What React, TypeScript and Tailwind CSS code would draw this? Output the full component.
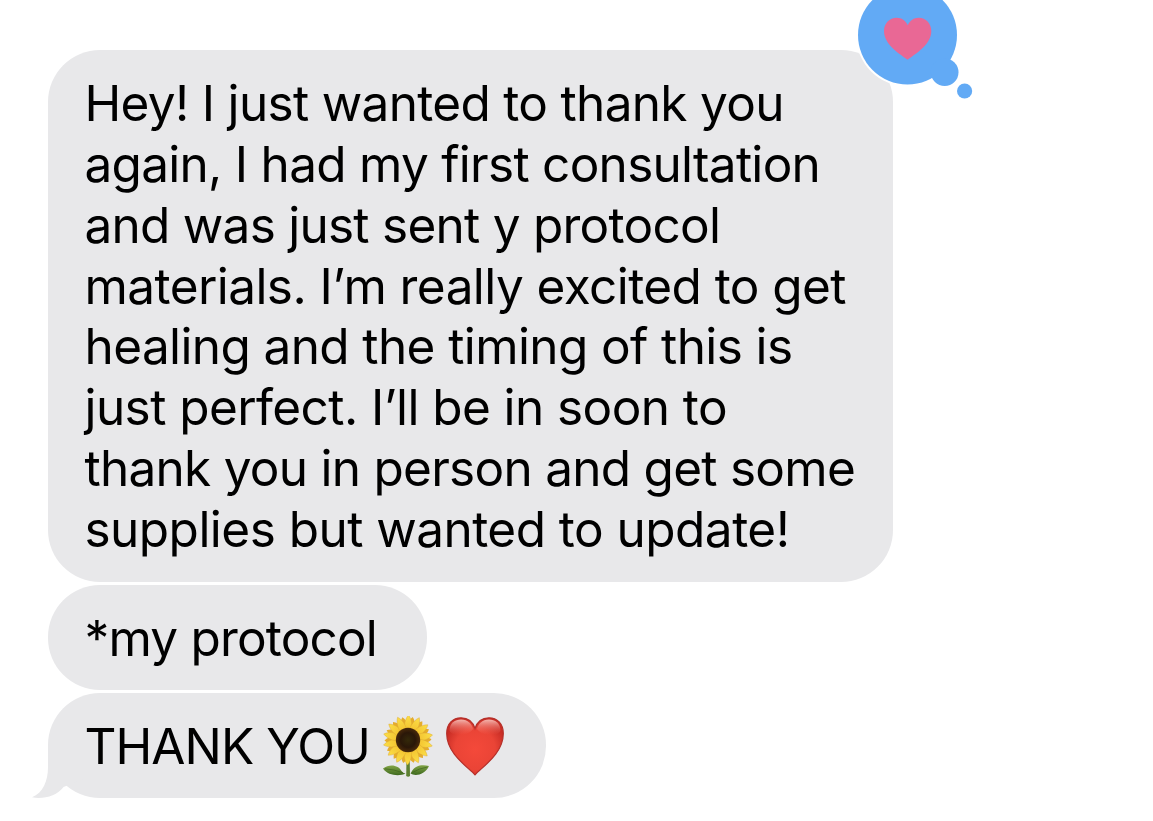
import type { ReactNode } from "react";

const OUTER_PETALS = Array.from({ length: 14 }, (_, i) => (i * 360) / 14);
const INNER_PETALS = OUTER_PETALS.map((angle) => angle + 180 / 14);

const message = [
  { text: "Hey! I just wanted to thank you", tracking: "tracking-[-0.68px]" },
  { text: "again, I had my first consultation", tracking: "tracking-[-0.72px]" },
  { text: "and was just sent y protocol", tracking: "tracking-[-0.74px]" },
  { text: "materials. I’m really excited to get", tracking: "tracking-[-0.57px]" },
  { text: "healing and the timing of this is", tracking: "tracking-[-0.61px]" },
  { text: "just perfect. I’ll be in soon to", tracking: "tracking-[-0.57px]" },
  { text: "thank you in person and get some", tracking: "tracking-[-0.73px]" },
  { text: "supplies but wanted to update!", tracking: "tracking-[-0.53px]" },
];

const Sunflower = () => (
  <svg viewBox="0 0 52 64" className="h-16 w-[52px] shrink-0" aria-label="sunflower">
    <defs>
      <linearGradient id="petal" x1="0" y1="0" x2="0" y2="1">
        <stop offset="0" stopColor="#fbdf48" />
        <stop offset="1" stopColor="#eeb01f" />
      </linearGradient>
      <radialGradient id="seeds">
        <stop offset="0" stopColor="#34290a" />
        <stop offset="0.6" stopColor="#2a1708" />
        <stop offset="1" stopColor="#4a2a0a" />
      </radialGradient>
      <linearGradient id="leaf" x1="0" y1="0" x2="0" y2="1">
        <stop offset="0" stopColor="#83a546" />
        <stop offset="1" stopColor="#3f6a20" />
      </linearGradient>
    </defs>
    <path d="M24.500 43h3.200l.3 17q-1.800 1.300-3.800 0z" fill="#5d8032" />
    <path d="M23.500 57.500C18 60.500 6 60 1 52.500c7-5.500 16-3 18.500 2.500q1.500 2 4 2.500z" fill="url(#leaf)" />
    <path d="M28.500 57.500C33 60.500 43 59 47 50c-7-2-14-.5-17 5z" fill="url(#leaf)" />
    <path d="M3 52.800q9 .5 18 4M45.500 51q-9 1.500-15 5.500" fill="none" stroke="#41651f" strokeWidth="0.7" />
    <g transform="translate(0 -3)">
      {INNER_PETALS.map((angle) => (
        <path
          key={angle}
          d="M26 26C20.500 17 21.500 8 25.500 3.500 30.500 8 31 17 26 26z"
          fill="#e5ac2c"
          transform={`rotate(${angle} 26 27)`}
        />
      ))}
      {OUTER_PETALS.map((angle) => (
        <path
          key={angle}
          d="M26 26C20.500 17 22 7 26.500 2 30.500 7 31.500 17 26 26z"
          fill="url(#petal)"
          stroke="#dba52e"
          strokeWidth="0.4"
          transform={`rotate(${angle} 26 27)`}
        />
      ))}
      <circle cx="26" cy="27" r="12.200" fill="url(#seeds)" />
    </g>
  </svg>
);

const RedHeart = () => (
  <svg viewBox="0 0 60 60" className="h-[60px] w-[60px] shrink-0" aria-label="red heart">
    <defs>
      <radialGradient id="heartFill" cx="0.5" cy="0.55" r="0.55">
        <stop offset="0" stopColor="#f4493a" />
        <stop offset="0.65" stopColor="#ea4436" />
        <stop offset="1" stopColor="#c92d25" />
      </radialGradient>
      <linearGradient id="heartShine" x1="0" y1="0" x2="0" y2="1">
        <stop offset="0" stopColor="#ffd9d2" stopOpacity="0.8" />
        <stop offset="1" stopColor="#f4685b" stopOpacity="0" />
      </linearGradient>
    </defs>
    <path
      d="M30 58.800C23 51 1.700 38 1.700 17.500 1.700 7.500 8 1.800 16 1.800 23 1.800 28 6 30 12.500 32 6 37 1.800 44 1.800 52 1.800 58.300 7.500 58.300 17.500 58.300 38 37 51 30 58.800z"
      fill="url(#heartFill)"
      stroke="#b5302a"
      strokeWidth="1.200"
    />
    <path d="M4.500 15C4.500 7 10 3.500 16 3.500 23 3.500 27 8 28 13 24 20 8 21 4.500 15z" fill="url(#heartShine)" />
    <path d="M55.500 15C55.500 7 50 3.500 44 3.500 37 3.500 33 8 32 13 36 20 52 21 55.500 15z" fill="url(#heartShine)" />
  </svg>
);

const Reaction = () => (
  <svg
    viewBox="850 0 130 104"
    className="absolute left-[850px] top-0 h-[104px] w-[130px]"
    aria-label="loved"
  >
    <circle cx="907.500" cy="35" r="51.500" fill="#fff" />
    <g fill="#62aaf5">
      <circle cx="907.500" cy="35" r="49.500" />
      <circle cx="944.700" cy="72.300" r="13.800" />
      <circle cx="964.600" cy="91" r="7.600" />
    </g>
    <path
      d="M907.600 59.800C901 54.500 884 45.500 884 31 884 23.500 889.500 17.800 896.800 17.800 901.500 17.800 905.500 20.500 907.700 25.300 910 20.500 914 17.800 918.600 17.800 925.800 17.800 931.300 23.500 931.300 31 931.300 45.500 914 54.500 907.600 59.800z"
      fill="#e96895"
    />
  </svg>
);

const Bubble = ({ className, children }: { className: string; children: ReactNode }) => (
  <div className={`bg-[#e8e8ea] pl-[36.5px] whitespace-nowrap ${className}`}>{children}</div>
);

const App = () => {
  return (
    <div className="relative h-[821px] w-[1153px] overflow-hidden bg-white font-['Inter',sans-serif] text-[49.5px] leading-[60.8px] text-black">
      <div className="flex flex-col items-start gap-[3.5px] pt-[50px] pl-12">
        <Bubble className="h-[531.5px] w-[845px] rounded-[52px] pt-[23.3px]">
          {message.map(({ text, tracking }) => (
            <p key={text} className={tracking}>
              {text}
            </p>
          ))}
        </Bubble>
        <Bubble className="h-[104.5px] w-[379px] rounded-[52px] pt-[22.5px]">
          <p className="tracking-[-0.82px]">*my protocol</p>
        </Bubble>
        <div className="relative">
          <Bubble className="flex h-[105px] w-[498px] items-start rounded-[52px] pt-[22.5px]">
            <p className="w-[297.5px] tracking-[-0.95px]">THANK YOU</p>
            <Sunflower />
            <div className="pl-[11px]">
              <RedHeart />
            </div>
          </Bubble>
          <svg viewBox="0 0 60 60" className="absolute -left-4 top-[46px] h-[60px] w-[60px]">
            <path d="M16 6V28C16 42 11 54 0 58.300 11 60.500 25 57 31.500 48L52 40V6z" fill="#e8e8ea" />
          </svg>
        </div>
      </div>
      <Reaction />
    </div>
  );
};

export default App;
